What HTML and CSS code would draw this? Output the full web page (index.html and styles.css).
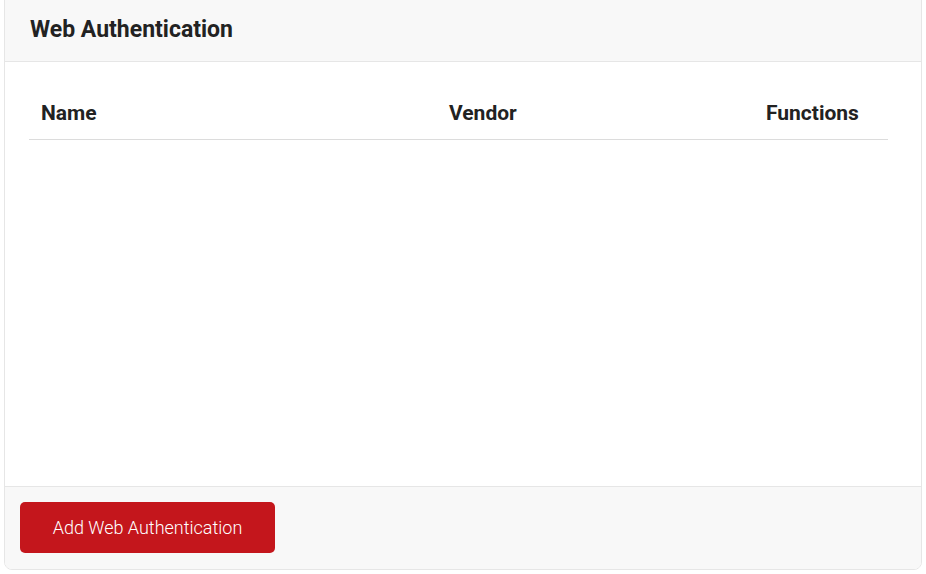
FILE: index.html
```html
<!DOCTYPE html>
<html>
<head>
<meta charset="utf-8">
<link rel="stylesheet" href="styles.css">
</head>
<body>
<div class="card">
  <div class="card-header">
    <h2 class="title">Web Authentication</h2>
  </div>
  <div class="card-body">
    <div class="table">
      <div class="thead">
        <div class="th">Name</div>
        <div class="th">Vendor</div>
        <div class="th">Functions</div>
      </div>
    </div>
  </div>
  <div class="card-footer">
    <button class="btn">Add Web Authentication</button>
  </div>
</div>
</body>
</html>
```
FILE: styles.css
```css
html, body {
  margin: 0;
  padding: 0;
  background: #ffffff;
  font-family: Roboto, "Liberation Sans", sans-serif;
  color: #212121;
}
.card {
  margin: -8px 4px 0 4px;
  border: 1px solid #e6e6e6;
  border-radius: 8px;
  overflow: hidden;
  background: #fff;
}
.card-header {
  background: #f8f8f8;
  border-bottom: 1px solid #e6e6e6;
  padding: 23px 25px 18px;
}
.title {
  margin: 0;
  font-size: 23px;
  line-height: 27px;
  font-weight: 700;
  color: #222;
}
.card-body {
  height: 424px;
  padding: 0 33px 0 24px;
}
.thead {
  display: grid;
  grid-template-columns: 408px 317px 1fr;
  border-bottom: 1px solid #dcdcdc;
  padding-top: 39px;
  padding-bottom: 14px;
}
.th {
  font-size: 21px;
  line-height: 24px;
  font-weight: 700;
  color: #222;
  padding-left: 12px;
}
.card-footer {
  background: #f8f8f8;
  border-top: 1px solid #e6e6e6;
  padding: 15px 15px 16px;
}
.btn {
  display: block;
  width: 255px;
  height: 51px;
  background: #c4161c;
  color: #fff;
  border: none;
  border-radius: 5px;
  font-family: Roboto, "Liberation Sans", sans-serif;
  font-size: 18px;
  font-weight: 300;
  padding: 0 0 1px;
}
```
